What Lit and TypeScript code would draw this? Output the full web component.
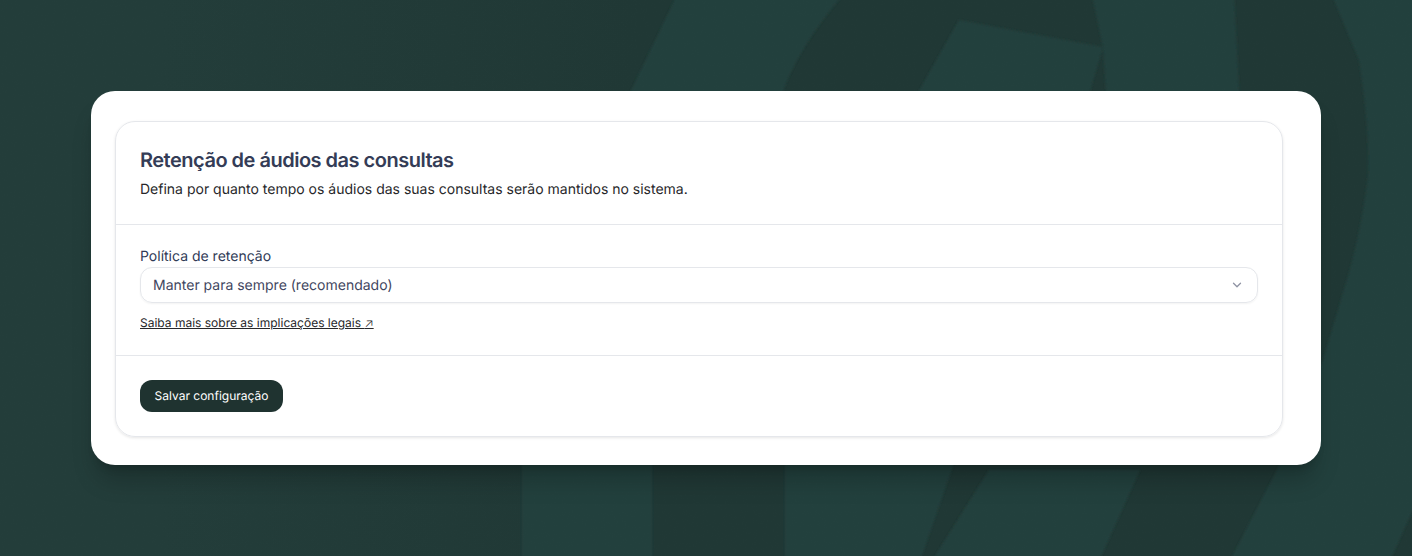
import { LitElement, html, css, svg } from "lit";
import { customElement } from "lit/decorators.js";

@customElement("app-root")
export class AppRoot extends LitElement {
  static styles = css`
    :host {
      display: block;
      font-family: "Inter", "Liberation Sans", sans-serif;
      text-rendering: geometricPrecision;
    }
    .page {
      position: relative;
      height: 556px;
      overflow: hidden;
      background: #203835;
      display: flex;
      align-items: flex-start;
      justify-content: center;
      box-sizing: border-box;
      padding-top: 91px;
    }
    .bg {
      position: absolute;
      inset: 0;
      width: 100%;
      height: 100%;
    }
    .outer {
      position: relative;
      box-sizing: border-box;
      width: 1230px;
      height: 374px;
      background: #fff;
      border-radius: 24px;
      padding: 30px 38px 28px 24px;
      box-shadow: 0 20px 25px -5px rgba(0, 0, 0, 0.2), 0 8px 10px -6px rgba(0, 0, 0, 0.2);
    }
    .card {
      box-sizing: border-box;
      height: 316px;
      border: 1px solid #e5e7eb;
      border-radius: 20px;
      box-shadow: 0 1px 3px rgba(0, 0, 0, 0.1);
      display: flex;
      flex-direction: column;
    }
    .head {
      height: 103px;
      box-sizing: border-box;
      padding: 24px 24px 0;
      border-bottom: 1px solid #e5e7eb;
    }
    h2 {
      margin: 0;
      font-size: 20px;
      line-height: 28px;
      font-weight: 580;
      letter-spacing: -0.5px;
      color: #343c56;
    }
    .desc {
      margin: 6px 0 0;
      font-size: 14px;
      line-height: 20px;
      color: #27272a;
    }
    .body {
      height: 131px;
      box-sizing: border-box;
      padding: 22px 24px 0;
      border-bottom: 1px solid #e5e7eb;
    }
    label {
      display: block;
      font-size: 14px;
      line-height: 20px;
      font-weight: 430;
      color: #2f3a56;
    }
    .select {
      box-sizing: border-box;
      height: 36px;
      border: 1px solid #e5e7eb;
      border-radius: 12px;
      box-shadow: 0 1px 2px rgba(0, 0, 0, 0.05);
      display: flex;
      align-items: center;
      justify-content: space-between;
      padding: 0 13px 0 12px;
      font-size: 14px;
      color: #3f4660;
    }
    .select svg {
      width: 14px;
      height: 14px;
      color: #8f93a3;
    }
    .link {
      display: inline-block;
      margin-top: 12px;
      font-size: 12px;
      line-height: 16px;
      color: #27272a;
      text-decoration: underline;
    }
    .arrow {
      font-weight: 300;
    }
    .foot {
      padding: 24px;
    }
    button {
      display: flex;
      align-items: center;
      justify-content: center;
      height: 32px;
      width: 143px;
      border: 0;
      border-radius: 12px;
      background: #1f3330;
      color: #fff;
      font: 430 12px/16px "Inter", "Liberation Sans", sans-serif;
      text-rendering: geometricPrecision;
      padding: 0 0 1px;
    }
  `;

  render() {
    return html`
      <div class="page">
        <svg class="bg" viewBox="0 0 1412 556" aria-hidden="true">
          <defs>
            <linearGradient id="left" x1="0" x2="1" y1="0" y2="0">
              <stop offset="0" stop-color="#233d3a" />
              <stop offset="0.25" stop-color="#233d3a" />
              <stop offset="1" stop-color="#233d3a" stop-opacity="0" />
            </linearGradient>
            <filter id="grain" x="0" y="0" width="100%" height="100%">
              <feTurbulence type="fractalNoise" baseFrequency="0.9" numOctaves="2" seed="4" />
              <feColorMatrix values="0 0 0 0 1  0 0 0 0 1  0 0 0 0 1  0.5 0 0 0 -0.2" />
            </filter>
            <filter id="soft"><feGaussianBlur stdDeviation="0.8" /></filter>
          </defs>
          <rect width="640" height="556" fill="url(#left)" />
          <g fill="#24403d" filter="url(#soft)">
            ${svg`
              <path d="M677 -5 L631 91 L522 320 L522 561 L652 561 L652 400 L783 91 Q800 45 843 -5 Z" />
              <path d="M959 20 L1103 47 L1090 91 L1000 330 L920 561 L785 561 L785 330 L919 91 Z" />
              <path d="M1090 470 L989 470 L932 561 L1099 561 L1140 470 Z" />
              <path d="M1092 -5 L1103 47 L1106 91 L1106 200 L1239 200 L1239 91 L1234 -5 Z" />
              <path d="M1332 -5 L1417 -5 L1417 500 L1390 561 L1230 561 L1277 470 L1323 360 L1343 293 Q1360 240 1368 177 Q1370 130 1359 60 Z" />
            `}
          </g>
          <rect width="1412" height="556" filter="url(#grain)" opacity="0.03" />
        </svg>
        <div class="outer">
          <div class="card">
            <div class="head">
              <h2>Retenção de áudios das consultas</h2>
              <p class="desc">Defina por quanto tempo os áudios das suas consultas serão mantidos no sistema.</p>
            </div>
            <div class="body">
              <label>Política de retenção</label>
              <div class="select">
                <span>Manter para sempre (recomendado)</span>
                <svg viewBox="0 0 16 16" fill="none" stroke="currentColor" stroke-width="1.5" stroke-linecap="round" stroke-linejoin="round">
                  <path d="M4 6l4 4 4-4" />
                </svg>
              </div>
              <a class="link">Saiba mais sobre as implicações legais <span class="arrow">↗</span></a>
            </div>
            <div class="foot"><button>Salvar configuração</button></div>
          </div>
        </div>
      </div>
    `;
  }
}
